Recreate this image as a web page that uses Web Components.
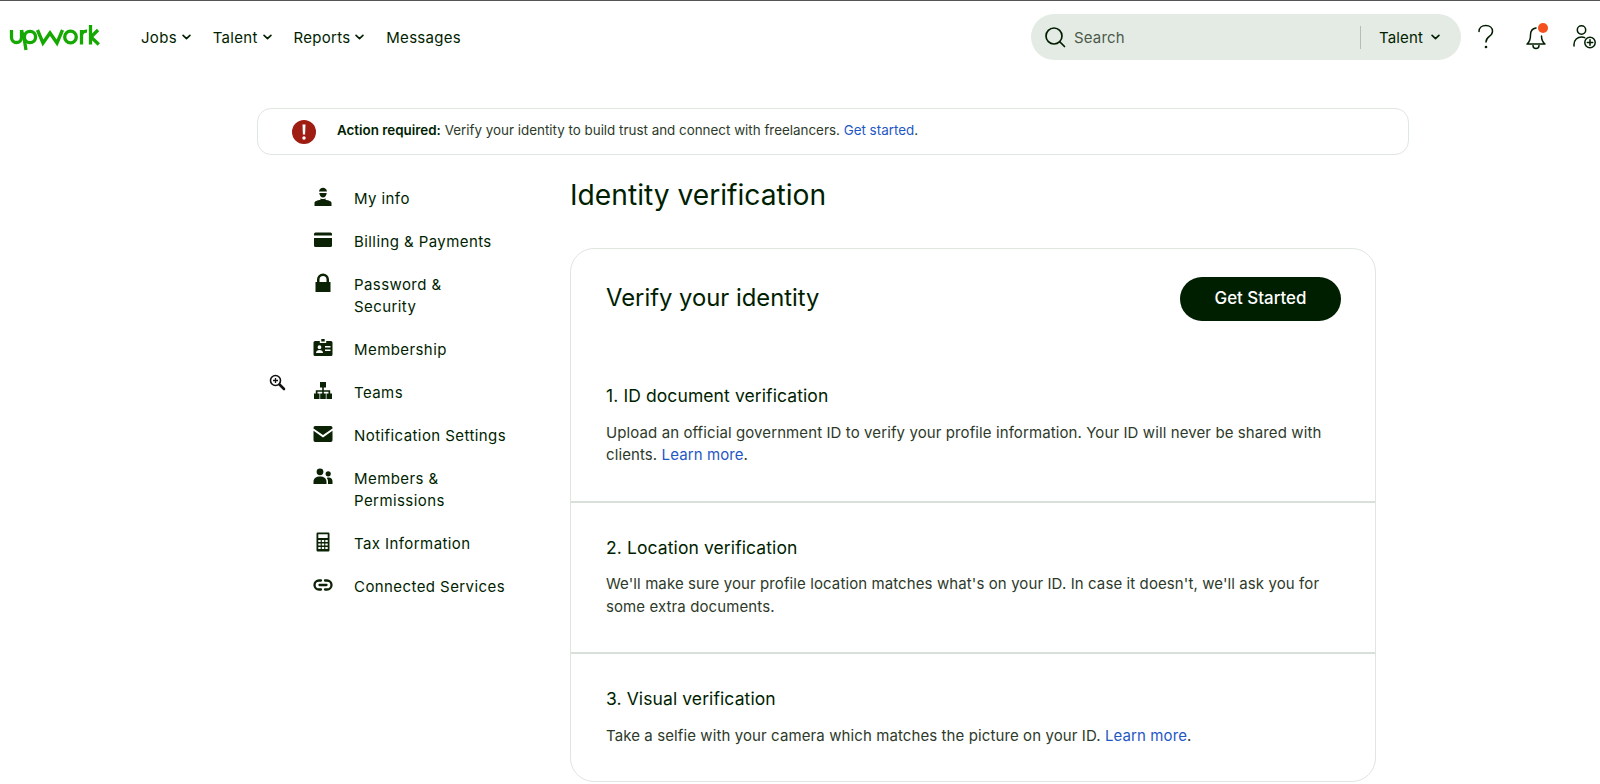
<!DOCTYPE html>
<html lang="en">
<head>
  <meta charset="UTF-8">
  <title>Identity verification</title>
  <style>
    html, body { margin: 0; background: #fff; }
    body { font-family: Inter, "Liberation Sans", sans-serif; color: #001e00; }
    a { color: #1f57c3; text-decoration: none; }
  </style>
</head>
<body>
  <up-app>
    <up-topbar slot="top">
      <up-nav-item caret>Jobs</up-nav-item>
      <up-nav-item caret>Talent</up-nav-item>
      <up-nav-item caret>Reports</up-nav-item>
      <up-nav-item>Messages</up-nav-item>
    </up-topbar>
    <up-alert slot="alert"><b>Action required:</b> Verify your identity to build trust and connect with freelancers. <a href="#">Get started</a>.</up-alert>
    <up-side-nav slot="side">
      <up-side-item icon="person">My info</up-side-item>
      <up-side-item icon="card">Billing &amp; Payments</up-side-item>
      <up-side-item icon="lock">Password &amp;<br>Security</up-side-item>
      <up-side-item icon="badge">Membership</up-side-item>
      <up-side-item icon="org">Teams</up-side-item>
      <up-side-item icon="mail">Notification Settings</up-side-item>
      <up-side-item icon="people">Members &amp;<br>Permissions</up-side-item>
      <up-side-item icon="calc">Tax Information</up-side-item>
      <up-side-item icon="link">Connected Services</up-side-item>
    </up-side-nav>
    <up-verify-card slot="main">
      <up-step heading="1. ID document verification">Upload an official government ID to verify your profile information. Your ID will never be shared with<br>clients. <a href="#">Learn more</a>.</up-step>
      <up-step heading="2. Location verification">We'll make sure your profile location matches what's on your ID. In case it doesn't, we'll ask you for some extra documents.</up-step>
      <up-step heading="3. Visual verification">Take a selfie with your camera which matches the picture on your ID. <a href="#">Learn more</a>.</up-step>
    </up-verify-card>
  </up-app>

  <script>
    const ICONS = {
      person: '<path d="M6 4.600C6.400 2 8 .8 10 .8s3.600 1.200 4 3.800z"/><path d="M6.300 6h7.400c-.2 2.600-1.700 4.600-3.700 4.600S6.500 8.600 6.300 6z"/><path d="M7.500 11.200c.8.600 1.600.9 2.500.9s1.700-.3 2.500-.9v1.600c3 .5 6 1.500 6 3.200V19h-17v-3c0-1.700 3-2.700 6-3.200z"/>',
      card: '<path d="M2.500 2.500h15A1.500 1.500 0 0 1 19 4v1.500H1V4a1.500 1.500 0 0 1 1.500-1.500zM1 8h18v7.500a1.500 1.500 0 0 1-1.500 1.500h-15A1.500 1.500 0 0 1 1 15.500z"/>',
      lock: '<path fill-rule="evenodd" d="M10 .5a6 6 0 0 1 6 6V9h1.500v10h-15V9H4V6.500a6 6 0 0 1 6-6zM6.500 9h7V6.500a3.500 3.500 0 0 0-7 0z"/>',
      badge: '<path fill-rule="evenodd" d="M8.300 1h3.400v2.500h-3.400zM2 3h4.800v2h6.400V3H18a1.500 1.500 0 0 1 1.500 1.500v12A1.500 1.500 0 0 1 18 18H2A1.500 1.500 0 0 1 .5 16.500v-12A1.500 1.500 0 0 1 2 3zm4.500 4.300a1.900 1.900 0 1 0 0 3.800 1.900 1.900 0 0 0 0-3.800zM3 15h7c0-1.900-1.500-3-3.500-3S3 13.100 3 15zm9-6.900v1.500h5.500V8.100zm0 3.500v1.500h5.500v-1.500z"/>',
      org: '<path d="M7 1h6v5.500h-2.200v2.700h6.400V12.500H19V18h-5.500v-5.500h2V10.800h-4.700v1.700H12.800V18H7.200v-5.500h2V10.800H4.500v1.700h2V18H1v-5.500h1.800V9.200h6.400V6.500H7z"/>',
      mail: '<path d="M2.200 2H17.800A1.700 1.700 0 0 1 19.500 3.700V4.400L10 11 .5 4.400V3.700A1.700 1.700 0 0 1 2.200 2zM.5 6.800 10 13.400l9.500-6.600V16.300a1.700 1.700 0 0 1-1.700 1.700H2.200a1.700 1.700 0 0 1-1.700-1.700z"/>',
      people: '<circle cx="7" cy="4.800" r="3.400"/><circle cx="15.200" cy="6.800" r="2.600"/><path d="M.5 17v-2.500C.5 11.400 3.400 9.500 7 9.500s6.500 1.900 6.500 5V17zM15 17v-2.700c0-1.300-.4-2.500-1.200-3.400.6-.3 1.200-.4 1.900-.4 2.200 0 3.800 1.500 3.800 3.600V17z"/>',
      calc: '<path fill-rule="evenodd" d="M4.700.5h10.600a1.200 1.200 0 0 1 1.200 1.200v16.600a1.200 1.200 0 0 1-1.200 1.200H4.700a1.200 1.200 0 0 1-1.200-1.200V1.700A1.200 1.200 0 0 1 4.700.5zM5.300 2.300v3.800h9.400V2.300zM5.300 8v2h2.400V8zm3.500 0v2h2.400V8zm3.500 0v2h2.400V8zM5.300 11.500v2h2.400v-2zm3.500 0v2h2.400v-2zm3.500 0v2h2.400v-2zM5.300 15v2h2.400v-2zm3.500 0v2h2.400v-2zm3.500 0v2h2.400v-2z"/>',
      link: '<path d="M8 5.500H6a4.500 4.500 0 0 0 0 9h2M12 5.500h2a4.500 4.500 0 0 1 0 9h-2M6.500 10h7" fill="none" stroke="currentColor" stroke-width="2.300" stroke-linecap="round"/>'
    }

    const caret = '<svg width="9" height="6" viewBox="0 0 10 6" fill="none" stroke="currentColor" stroke-width="1.800" stroke-linecap="round" stroke-linejoin="round"><path d="M1.200 1.200 5 4.800l3.800-3.600"/></svg>'

    class UpApp extends HTMLElement {
      constructor() {
        super()
        this.attachShadow({ mode: 'open' }).innerHTML = `
          <style>
            :host { display: block; }
            .wrap { margin-left: 257px; width: 1152px; }
            .cols { display: grid; grid-template-columns: 313px 806px; }
          </style>
          <slot name="top"></slot>
          <div class="wrap">
            <slot name="alert"></slot>
            <div class="cols">
              <slot name="side"></slot>
              <slot name="main"></slot>
            </div>
          </div>`
      }
    }

    class UpTopbar extends HTMLElement {
      constructor() {
        super()
        this.attachShadow({ mode: 'open' }).innerHTML = `
          <style>
            :host { display: flex; align-items: center; height: 71px; border-top: 1px solid #555; padding-left: 9px; }
            .logo { display: block; margin-right: 40px; flex: none; }
            nav { display: flex; flex: 1; padding-top: 1px; }
            .search { display: flex; align-items: center; width: 430px; height: 46px; margin-top: 1px; box-sizing: border-box; padding: 0 21px 0 13px; border-radius: 23px; background: #e4ebe4; font-size: 15px; letter-spacing: .15px; flex: none; }
            .ph { flex: 1; margin-left: 8px; color: #4c5a4a; }
            .div { width: 1px; height: 23px; background: #b5bdb5; margin-right: 18px; }
            .scope { display: flex; align-items: center; gap: 8px; }
            .icons { display: flex; align-items: center; gap: 25px; margin-left: 13px; width: 126px; flex: none; }
            .bell { position: relative; display: block; margin: 0 -1px 0 1px; }
            .dot { position: absolute; left: 14px; top: -1px; width: 10px; height: 10px; border-radius: 50%; background: #f4511e; }
          </style>
          <svg class="logo" width="92" height="30" viewBox="0 0 92 30" fill="none" stroke="#14a800" stroke-width="3.300" role="img" aria-label="Upwork">
            <path d="M2.500 8v7.500a5 5 0 0 0 10 0V8"/>
            <path d="M12.500 8c.5 3.500 2.200 6 2.800 9.500L17 28"/>
            <circle cx="21" cy="15" r="5.600"/>
            <path d="M28.500 8 34 21 41 11 48 21 53.500 8" stroke-linejoin="miter"/>
            <circle cx="61.500" cy="15" r="5.800"/>
            <path d="M72.500 22.500V8M72.500 14c0-3.200 2-5 5.500-4.800"/>
            <path d="M81.500 22.500V3M89 8l-7 7 7.800 7.500"/>
          </svg>
          <nav><slot></slot></nav>
          <div class="search">
            <svg width="22" height="22" viewBox="0 0 22 22" fill="none" stroke="#001e00" stroke-width="1.700" stroke-linecap="round"><circle cx="10" cy="10" r="8"/><path d="M16 16l4.500 4.500"/></svg>
            <span class="ph">Search</span>
            <span class="div"></span>
            <span class="scope">Talent ${caret}</span>
          </div>
          <div class="icons">
            <svg width="24" height="26" viewBox="0 0 24 26" fill="none" stroke="#001e00" stroke-width="1.500" stroke-linecap="round"><path d="M5 7.500C5 3.800 8 1.500 11.800 1.500c3.800 0 6.700 2.300 6.700 5.700 0 2.600-1.500 4-3.400 5.400-2 1.500-3.100 2.700-3.100 5.400"/><circle cx="12" cy="23" r=".6"/></svg>
            <span class="bell">
              <svg style="display:block" width="24" height="26" viewBox="0 0 24 26" fill="none" stroke="#001e00" stroke-width="1.500" stroke-linecap="round" stroke-linejoin="round"><path d="M12 4C7.500 4.600 6.500 8 6.500 11c0 4-1 7-3.500 9h18c-2.500-2-3.500-4.500-3.500-8"/><path d="M9 21.500a3 3 0 0 0 6 0"/></svg>
              <span class="dot"></span>
            </span>
            <svg width="26" height="26" viewBox="0 0 26 26" fill="none" stroke="#001e00" stroke-width="1.500" stroke-linecap="round"><circle cx="9.500" cy="6" r="4.200"/><path d="M2 22v-1.500c0-4.500 3.500-7.500 7.500-7.500 1.200 0 2.200.2 3.200.7"/><circle cx="18" cy="18.500" r="5.200"/><path d="M18 15.800v5.400M15.300 18.500h5.400"/></svg>
          </div>`
      }
    }

    class UpNavItem extends HTMLElement {
      constructor() {
        super()
        this.attachShadow({ mode: 'open' }).innerHTML = `
          <style>
            :host { display: flex; align-items: center; gap: 5px; margin-right: 21.800px; font-size: 15px; letter-spacing: .3px; }
          </style>
          <slot></slot>${this.hasAttribute('caret') ? caret : ''}`
      }
    }

    class UpAlert extends HTMLElement {
      constructor() {
        super()
        this.attachShadow({ mode: 'open' }).innerHTML = `
          <style>
            :host { display: flex; align-items: center; height: 47px; box-sizing: border-box; margin-top: 36px; padding-left: 34px; gap: 21px; border: 1px solid #e0e6e0; border-radius: 14px; font-size: 13.400px; color: #2d3a2a; }
            ::slotted(b) { font-weight: 600; color: #001e00; }
            span { padding-bottom: 3px; }
          </style>
          <svg width="24" height="24" viewBox="0 0 24 24"><circle cx="12" cy="12" r="12" fill="#9e1c12"/><path d="M10.500 4.500h3l-.4 10h-2.200z" fill="#fff"/><circle cx="12" cy="18" r="1.700" fill="#fff"/></svg>
          <span><slot></slot></span>`
      }
    }

    class UpSideNav extends HTMLElement {
      constructor() {
        super()
        this.attachShadow({ mode: 'open' }).innerHTML = `
          <style>
            :host { display: flex; flex-direction: column; gap: 20.400px; padding: 33px 0 0 56px; position: relative; }
            .cursor { position: absolute; left: 12px; top: 219px; }
          </style>
          <slot></slot>
          <svg class="cursor" width="17" height="17" viewBox="0 0 17 17"><path d="M10.500 10.500 15 15" stroke="#111" stroke-width="2.600" stroke-linecap="round"/><circle cx="6.500" cy="6.500" r="5" fill="#fff" stroke="#111" stroke-width="1.600"/><path d="M4 6.500h5M6.500 4v5" stroke="#111" stroke-width="1.300"/></svg>`
      }
    }

    class UpSideItem extends HTMLElement {
      constructor() {
        super()
        const icon = ICONS[this.getAttribute('icon')] || ''
        this.attachShadow({ mode: 'open' }).innerHTML = `
          <style>
            :host { display: flex; gap: 21px; font-size: 15px; line-height: 22.500px; letter-spacing: .42px; color: #001e00; }
            svg { flex: none; display: block; color: #0b2204; fill: currentColor; margin-top: -1px; }
          </style>
          <svg width="20" height="20" viewBox="0 0 20 20">${icon}</svg>
          <span><slot></slot></span>`
      }
    }

    class UpVerifyCard extends HTMLElement {
      constructor() {
        super()
        this.attachShadow({ mode: 'open' }).innerHTML = `
          <style>
            :host { display: block; }
            h1 { margin: 22px 0 35px; font-size: 28.200px; line-height: 36px; font-weight: 400; color: #001e00; }
            .card { border: 1px solid #dfe5df; border-radius: 24px; box-sizing: border-box; height: 534px; }
            header { display: flex; align-items: center; justify-content: space-between; padding: 28px 34px 30px 35px; }
            h2 { margin: 0 0 3px; font-size: 23.800px; font-weight: 400; }
            button { width: 161px; height: 44px; border: 0; border-radius: 22px; padding: 0 0 2px; background: #001e00; color: #fff; font: 500 16.900px Inter, "Liberation Sans", sans-serif; }
          </style>
          <h1>Identity verification</h1>
          <div class="card">
            <header><h2>Verify your identity</h2><button>Get Started</button></header>
            <slot></slot>
          </div>`
      }
    }

    class UpStep extends HTMLElement {
      constructor() {
        super()
        this.attachShadow({ mode: 'open' }).innerHTML = `
          <style>
            :host { display: block; padding: 33px 34px 34px 35px; border-bottom: 2px solid #d9e0d9; }
            :host(:last-child) { border-bottom: 0; }
            h3 { margin: 0 0 13.500px; font-size: 17.500px; line-height: 24px; letter-spacing: .1px; font-weight: 400; color: #001e00; }
            p { margin: 0; font-size: 15px; line-height: 22.500px; letter-spacing: .1px; color: #2d3a2a; }
          </style>
          <h3>${this.getAttribute('heading')}</h3>
          <p><slot></slot></p>`
      }
    }

    customElements.define('up-app', UpApp)
    customElements.define('up-topbar', UpTopbar)
    customElements.define('up-nav-item', UpNavItem)
    customElements.define('up-alert', UpAlert)
    customElements.define('up-side-nav', UpSideNav)
    customElements.define('up-side-item', UpSideItem)
    customElements.define('up-verify-card', UpVerifyCard)
    customElements.define('up-step', UpStep)
  </script>
</body>
</html>
